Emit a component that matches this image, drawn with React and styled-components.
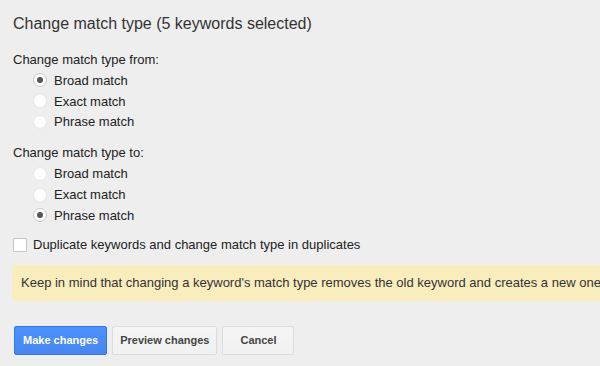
import React from 'react'
import styled, { createGlobalStyle } from 'styled-components'

const GlobalStyle = createGlobalStyle`
  html, body {
    margin: 0;
    padding: 0;
    background: #eeeeee;
    overflow: hidden;
  }
  body {
    font-family: Arial, 'Liberation Sans', sans-serif;
    color: #222;
  }
`

const Page = styled.div`
  padding: 14px 0 0 13px;
  width: 600px;
  height: 366px;
  box-sizing: border-box;
  overflow: hidden;
`

const Title = styled.div`
  font-size: 16px;
  line-height: 20px;
  color: #333;
`

const GroupLabel = styled.div`
  font-size: 13px;
  line-height: 20px;
  margin-top: ${props => props.top || 16}px;
`

const Options = styled.div`
  display: flex;
  flex-direction: column;
  padding-left: 20px;
`

const OptionRow = styled.label`
  display: flex;
  align-items: center;
  height: 20.8px;
  font-size: 13px;
  gap: 7px;
`

const Radio = styled.input.attrs({ type: 'radio' })`
  appearance: none;
  margin: 0;
  width: 14px;
  height: 14px;
  border-radius: 50%;
  background: #fff;
  border: 1px solid ${props => (props.checked ? '#c9c9c9' : '#e8e8e8')};
  box-sizing: border-box;
  position: relative;
  &:checked::after {
    content: '';
    position: absolute;
    left: 3px;
    top: 3px;
    width: 6px;
    height: 6px;
    border-radius: 50%;
    background: #555;
  }
`

const CheckRow = styled.label`
  display: flex;
  align-items: center;
  gap: 6px;
  height: 20px;
  margin-top: 9px;
  font-size: 13px;
`

const Checkbox = styled.input.attrs({ type: 'checkbox' })`
  appearance: none;
  margin: 0;
  width: 14px;
  height: 14px;
  background: #fff;
  border: 1px solid #c6c6c6;
  border-radius: 1px;
  box-sizing: border-box;
`

/* the notice runs on past the right edge of the dialog, as in the source */
const Notice = styled.div`
  margin-top: 10px;
  margin-left: -1px;
  height: 36px;
  display: flex;
  align-items: center;
  padding-left: 9px;
  background: #f9edbe;
  font-size: 13px;
  white-space: nowrap;
  overflow: hidden;
  color: #333;
`

const Buttons = styled.div`
  display: flex;
  gap: 5px;
  margin-top: 25px;
  margin-left: 1px;
`

const Button = styled.button`
  height: 29px;
  min-width: 72px;
  padding: 0 ${props => (props.primary ? 8 : 7)}px;
  box-sizing: border-box;
  border-radius: 2px;
  font-family: Arial, 'Liberation Sans', sans-serif;
  font-size: 11px;
  font-weight: bold;
  cursor: pointer;
  border: 1px solid ${props => (props.primary ? '#3079ed' : '#dcdcdc')};
  background: ${props =>
    props.primary
      ? 'linear-gradient(#4d90fe, #4787ed)'
      : 'linear-gradient(#f5f5f5, #f1f1f1)'};
  color: ${props => (props.primary ? '#fff' : '#444')};
`

const matchTypes = ['Broad match', 'Exact match', 'Phrase match']

function OptionGroup({ name, selected }) {
  return (
    <Options>
      {matchTypes.map(opt => (
        <OptionRow key={opt}>
          <Radio name={name} checked={opt === selected} readOnly />
          {opt}
        </OptionRow>
      ))}
    </Options>
  )
}

export default function App() {
  return (
    <>
      <GlobalStyle />
      <Page>
        <Title>Change match type (5 keywords selected)</Title>
        <GroupLabel>Change match type from:</GroupLabel>
        <OptionGroup name="from" selected="Broad match" />
        <GroupLabel top={11}>Change match type to:</GroupLabel>
        <OptionGroup name="to" selected="Phrase match" />
        <CheckRow>
          <Checkbox readOnly />
          Duplicate keywords and change match type in duplicates
        </CheckRow>
        <Notice>
          Keep in mind that changing a keyword's match type removes the old keyword and creates a new one.
        </Notice>
        <Buttons>
          <Button primary>Make changes</Button>
          <Button>Preview changes</Button>
          <Button>Cancel</Button>
        </Buttons>
      </Page>
    </>
  )
}
